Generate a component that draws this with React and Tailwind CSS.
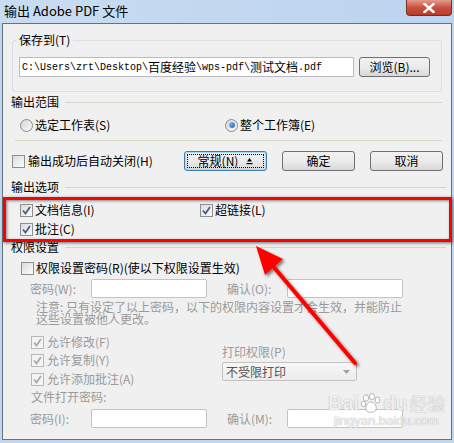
import React from "react";

const line = "h-px bg-[#d5d5c9]";

function Check({ checked, disabled }) {
  return (
    <span
      className={`w-[13px] h-[13px] shrink-0 flex items-center justify-center border ${
        disabled ? "border-[#b8b8b8] bg-[#f4f4f4]" : "border-[#8e8f8f] bg-linear-to-br from-[#dcdcdc] to-[#fbfbfb]"
      }`}
    >
      {checked && (
        <svg width="9" height="9" viewBox="0 0 9 9">
          <path
            d="M1 4.5 L3.5 7.5 L8 1"
            fill="none"
            stroke={disabled ? "#a8a8a8" : "#4a5d8f"}
            strokeWidth="1.8"
          />
        </svg>
      )}
    </span>
  );
}

function Radio({ checked }) {
  return (
    <span className="w-[13px] h-[13px] shrink-0 rounded-full border border-[#8a8a8a] bg-linear-to-br from-[#d6d6d6] to-[#fafafa] flex items-center justify-center">
      {checked && <span className="w-[6px] h-[6px] rounded-full bg-linear-to-br from-[#8fc4f5] to-[#1b5fb0]" />}
    </span>
  );
}

function Btn({ children, w, focus }) {
  return (
    <div
      className={`${w} h-[20px] rounded-[3px] border ${
        focus ? "border-[#3c7fb1] shadow-[inset_0_0_0_1px_#a6daf6]" : "border-[#707070]"
      } bg-linear-to-b from-[#f2f2f2] via-[#ebebeb] to-[#d8d8d8] flex items-center justify-center p-[2px]`}
    >
      <div className={`w-full h-full flex items-center justify-center ${focus ? "border border-dotted border-black" : ""}`}>
        {children}
      </div>
    </div>
  );
}

function Heading({ children, right = "mr-[5px]" }) {
  return (
    <div className={`flex items-center h-[16px] ml-[8px] ${right}`}>
      <span className="leading-[16px]">{children}</span>
      <div className={`flex-1 ml-[6px] ${line}`} />
    </div>
  );
}

function Field({ w = "w-[116px]" }) {
  return <div className={`${w} h-[19px] bg-white border border-[#c3c3c3] rounded-[2px]`} />;
}

function Paw() {
  return (
    <svg width="22" height="22" viewBox="0 0 22 22" className="mx-[1px]">
      <g fill="#ffffff" fillOpacity="0.85" stroke="#a8a8a8" strokeWidth="0.8">
        <ellipse cx="6" cy="6" rx="2.6" ry="3.2" />
        <ellipse cx="12" cy="4.5" rx="2.6" ry="3.2" />
        <ellipse cx="17.5" cy="8" rx="2.4" ry="3" />
        <ellipse cx="3.5" cy="12" rx="2.2" ry="2.8" />
        <path d="M11 10 C7 10 5 15 6 18 C7 21 15 21 16 18 C17 15 15 10 11 10 Z" />
      </g>
    </svg>
  );
}

export default function App() {
  const pathParts = [
    ["C:\\Users\\zrt\\Desktop\\", false],
    ["百度经验", true],
    ["\\wps-pdf\\", false],
    ["测试文档", true],
    [".pdf", false],
  ];

  return (
    <div className="relative w-[454px] h-[443px] overflow-hidden bg-[#c1d7ee] font-['Noto_Sans_CJK_SC',sans-serif] text-[12px] text-black">
      {/* title bar */}
      <div className="h-[23px] flex items-start bg-linear-to-r from-[#c9dcf1] to-[#bcd4ee]">
        <span className="pl-[4px] pt-[2px] text-[13px] leading-[18px]">输出 Adobe PDF 文件</span>
        <div className="ml-auto mr-[2px] w-[46px] h-[16px] rounded-b-[4px] border border-t-0 border-[#7b2b22] bg-linear-to-b from-[#e39a8c] via-[#c8513f] to-[#b83b2a] flex items-center justify-center">
          <svg width="12" height="10" viewBox="0 0 12 10">
            <path d="M1.5 1 L10.5 9 M10.5 1 L1.5 9" stroke="#fff" strokeWidth="2.4" strokeLinecap="square" />
          </svg>
        </div>
      </div>

      {/* dialog body */}
      <div className="mx-[2px] h-[417px] border border-[#66727e] bg-[#f0f0f0]">
        <fieldset className="ml-[9px] mt-[8px] w-[430px] border border-[#d5dfe5] rounded-[3px]">
          <legend className="ml-[3px] px-[3px] leading-[16px]">保存到(T)</legend>
          <div className="flex items-center pl-[6px] mt-[9px] mb-[14px]">
            <div className="w-[335px] h-[20px] bg-white border border-[#b8bcc2] flex items-center pl-[2px]">
              {pathParts.map(([t, cjk], i) =>
                cjk ? (
                  <span key={i} className="text-[12px]">{t}</span>
                ) : (
                  <span key={i} className="font-['Liberation_Mono',monospace] text-[10px]">{t}</span>
                )
              )}
            </div>
            <div className="ml-[5px]">
              <Btn w="w-[71px]">浏览(B)...</Btn>
            </div>
          </div>
        </fieldset>

        <div className="mt-[2px]">
          <Heading right="mr-[9px]">输出范围</Heading>
        </div>

        <div className="mt-[6px] h-[18px] flex items-center ml-[17px]">
          <div className="w-[205px] flex items-center gap-[2px]">
            <Radio />
            <span>选定工作表(S)</span>
          </div>
          <div className="flex items-center gap-[2px]">
            <Radio checked />
            <span>整个工作簿(E)</span>
          </div>
        </div>

        <div className={`mt-[6px] ml-[12px] mr-[9px] ${line}`} />

        <div className="mt-[10px] h-[20px] flex items-center ml-[9px]">
          <div className="w-[172px] flex items-center gap-[3px]">
            <Check />
            <span>输出成功后自动关闭(H)</span>
          </div>
          <Btn w="w-[83px]" focus>
            <span>常规(N)</span>
            <svg className="ml-[8px]" width="7" height="8" viewBox="0 0 7 8">
              <path d="M3.5 1 L6 4.5 L1 4.5 Z" fill="#000" />
              <rect x="0.5" y="6" width="6" height="1.2" fill="#000" />
            </svg>
          </Btn>
          <div className="ml-[15px]">
            <Btn w="w-[73px]">确定</Btn>
          </div>
          <div className="ml-[15px]">
            <Btn w="w-[73px]">取消</Btn>
          </div>
        </div>

        <div className="mt-[8px]">
          <Heading>输出选项</Heading>
        </div>

        <div className="mt-[7px] h-[16px] flex items-center ml-[17px]">
          <div className="w-[180px] flex items-center gap-[2px]">
            <Check checked />
            <span>文档信息(I)</span>
          </div>
          <div className="flex items-center gap-[2px]">
            <Check checked />
            <span>超链接(L)</span>
          </div>
        </div>
        <div className="mt-[3px] h-[16px] flex items-center gap-[2px] ml-[17px]">
          <Check checked />
          <span>批注(C)</span>
        </div>

        <div className="mt-[2px]">
          <Heading>权限设置</Heading>
        </div>

        <div className="mt-[5px] h-[16px] flex items-center gap-[2px] ml-[18px]">
          <Check />
          <span>权限设置密码(R)(使以下权限设置生效)</span>
        </div>

        <div className="mt-[3px] flex items-center ml-[27px] text-[#9a9a9a]">
          <span className="w-[61px]">密码(W):</span>
          <Field />
          <span className="ml-[20px] w-[60px]">确认(O):</span>
          <Field />
        </div>

        <div className="mt-[3px] ml-[33px] leading-[12px] text-[#9a9a9a]">
          <div>注意: 只有设定了以上密码，以下的权限内容设置才会生效，并能防止</div>
          <div>这些设置被他人更改。</div>
        </div>

        <div className="mt-[9px] flex ml-[28px] text-[#9a9a9a]">
          <div className="w-[191px]">
            <div className="h-[16px] flex items-center gap-[3px]">
              <Check checked disabled />
              <span>允许修改(F)</span>
            </div>
            <div className="mt-[2px] h-[16px] flex items-center gap-[3px]">
              <Check checked disabled />
              <span>允许复制(Y)</span>
            </div>
            <div className="mt-[3px] h-[16px] flex items-center gap-[3px]">
              <Check checked disabled />
              <span>允许添加批注(A)</span>
            </div>
          </div>
          <div className="mt-[10px]">
            <div className="h-[16px] leading-[16px]">打印权限(P)</div>
            <div className="mt-[2px] w-[135px] h-[19px] rounded-[2px] border border-[#c3c3c3] bg-linear-to-b from-[#f7f7f7] to-[#ececec] flex items-center pl-[3px] pr-[6px] text-[#555]">
              <span className="flex-1">不受限打印</span>
              <svg width="7" height="4" viewBox="0 0 7 4">
                <path d="M0 0 L7 0 L3.5 4 Z" fill="#a0a0a0" />
              </svg>
            </div>
          </div>
        </div>

        <div className="mt-[2px] ml-[28px] h-[16px] leading-[16px] text-[#9a9a9a]">文件打开密码:</div>

        <div className="mt-[4px] flex items-center ml-[27px] text-[#9a9a9a]">
          <span className="w-[61px]">密码(I):</span>
          <Field />
          <span className="ml-[20px] w-[60px]">确认(M):</span>
          <Field />
        </div>
      </div>

      {/* annotation overlay: highlight box */}
      <div className="absolute left-[3px] top-[197px] w-[449px] h-[45px] border-[3px] border-[#ff0000] shadow-[1px_1px_3px_rgba(0,0,0,0.55),inset_1px_1px_3px_rgba(0,0,0,0.45)] pointer-events-none" />

      {/* annotation overlay: arrow */}
      <svg className="absolute left-0 top-0 pointer-events-none" width="454" height="443" viewBox="0 0 454 443">
        <defs>
          <filter id="sh" x="-20%" y="-20%" width="140%" height="140%">
            <feDropShadow dx="2" dy="2" stdDeviation="1.5" floodColor="#000" floodOpacity="0.5" />
          </filter>
        </defs>
        <g filter="url(#sh)">
          <line x1="272" y1="265" x2="355" y2="363" stroke="#ff0000" strokeWidth="4" strokeLinecap="round" />
          <path d="M256 246 L265 275 L283 259 Z" fill="#ff0000" />
        </g>
      </svg>

      {/* watermark */}
      <div className="absolute left-[328px] top-[392px] pointer-events-none text-white/85 [text-shadow:0_0_1px_#8a8a8a]">
        <div className="flex items-center font-['Liberation_Sans',sans-serif] text-[20px] leading-[22px] font-bold">
          <span>Bai</span>
          <Paw />
          <span>du</span>
          <span className="ml-[2px] font-['Noto_Sans_CJK_SC',sans-serif] font-normal text-[18px]">经验</span>
        </div>
        <div className="font-['Liberation_Sans',sans-serif] text-[13px] leading-[14px] ml-[6px]">jingyan.baidu.com</div>
      </div>
    </div>
  );
}
